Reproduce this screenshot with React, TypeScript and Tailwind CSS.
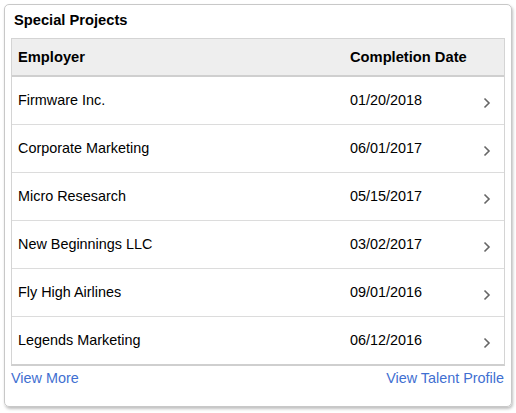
import React from "react";

const rows = [
  ["Firmware Inc.", "01/20/2018"],
  ["Corporate Marketing", "06/01/2017"],
  ["Micro Resesarch", "05/15/2017"],
  ["New Beginnings LLC", "03/02/2017"],
  ["Fly High Airlines", "09/01/2016"],
  ["Legends Marketing", "06/12/2016"],
];

function Chevron() {
  return (
    <svg width="8" height="12" viewBox="0 0 8 12" className="mt-[4px]">
      <path d="M1.5 1.5 L6 6 L1.5 10.5" fill="none" stroke="#666" strokeWidth="1.6" />
    </svg>
  );
}

export default function App() {
  return (
    <div className="w-[516px] h-[413px] bg-white pt-[4px] pl-[4px]" style={{ fontFamily: '"Liberation Sans", Arial, sans-serif' }}>
      <div className="w-[508px] h-[403px] border border-[#c8c8c8] rounded-[5px] shadow-[1px_2px_3px_rgba(0,0,0,0.25)] px-[6px] flex flex-col">
        <div className="h-[33px] pl-[3px] pt-[5px] text-[14.7px] font-bold text-black leading-[20px]">Special Projects</div>
        <div className="border border-[#d4d4d4] border-b-2 border-b-[#cfcfcf]">
          <div className="h-[38px] bg-[#eeeeee] border-b-2 border-[#cfcfcf] flex items-center text-[14.7px] font-bold text-black">
            <div className="pl-[6px] w-[338px]">Employer</div>
            <div>Completion Date</div>
          </div>
          {rows.map(([e, d], i) => (
            <div key={i} className={`flex items-center text-[14.4px] text-black ${i < rows.length - 1 ? "border-b border-[#dcdcdc] h-[48px]" : "h-[47px]"}`}>
              <div className="pl-[6px] w-[338px]">{e}</div>
              <div className="flex-1">{d}</div>
              <div className="w-[21px] flex">
                <Chevron />
              </div>
            </div>
          ))}
        </div>
        <div className="flex justify-between text-[14.4px] text-[#3f6fd1] pt-[2px] leading-[20px]">
          <span>View More</span>
          <span className="mr-[1px]">View Talent Profile</span>
        </div>
      </div>
    </div>
  );
}
